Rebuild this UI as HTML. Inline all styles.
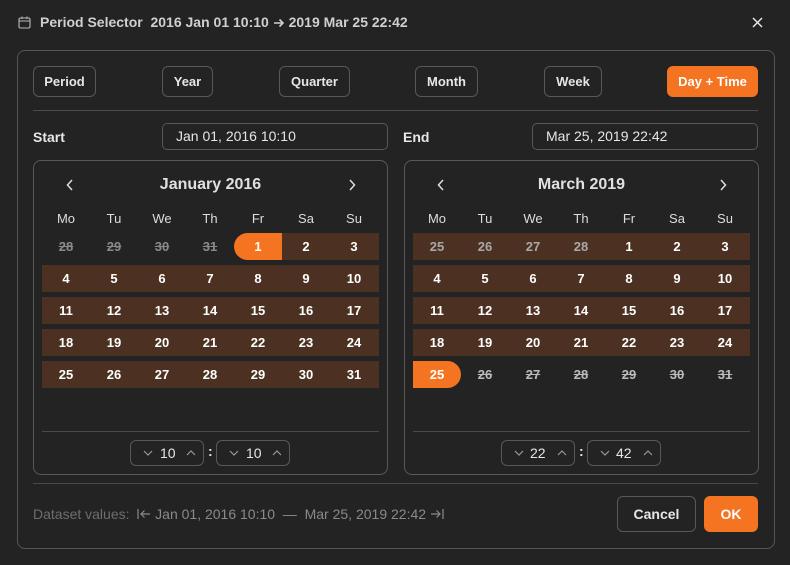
<!DOCTYPE html>
<html><head><meta charset="utf-8"><style>
*{box-sizing:border-box;margin:0;padding:0}
body{width:790px;height:565px;background:#232323;font-family:"Liberation Sans",sans-serif;color:#e6e6e6;position:relative;overflow:hidden}
.a{position:absolute}
.btn{position:absolute;top:66px;height:31px;border:1px solid #585858;border-radius:6px;font-size:13px;font-weight:bold;display:flex;align-items:center;justify-content:center;color:#e6e6e6}
.hr{position:absolute;height:1px;background:#4a4a4a}
.inp{position:absolute;top:123px;height:27px;border:1px solid #585858;border-radius:5px;font-size:14px;padding-left:13px;line-height:25px;color:#e6e6e6}
.lab{position:absolute;top:129px;font-size:14px;font-weight:bold}
.cal{position:absolute;top:160px;width:355px;height:315px;border:1px solid #585858;border-radius:8px}
.mt{position:absolute;top:15px;left:0;width:100%;text-align:center;font-size:16px;font-weight:bold;color:#e0e0e0}
.nav{position:absolute;top:18px}
.wd{position:absolute;top:50px;width:48px;text-align:center;font-size:13px;color:#ddd}
.row{position:absolute;left:8px;width:337px;height:27px;background:#4c3123}
.c{position:absolute;width:48px;height:27px;line-height:27px;text-align:center;font-size:13px;font-weight:bold;color:#fff}
.g{color:#8a8a8a;text-decoration:line-through}
.g2{color:#a8a8a8}
.s{color:#bbb;text-decoration:line-through}
.o{background:#f47421}
.sp{position:absolute;top:279px;height:26px;border:1px solid #585858;border-radius:6px;width:74px;font-size:14px;color:#e6e6e6}
.sp span{position:absolute;top:4px}
.sp svg{position:absolute;top:9px}
</style></head><body>
<svg class="a" style="left:18px;top:16px" width="13" height="13" viewBox="0 0 13 13"><rect x="1" y="2" width="11" height="10" rx="1.5" fill="none" stroke="#bbb" stroke-width="1.1"/><line x1="1" y1="5" x2="12" y2="5" stroke="#bbb" stroke-width="1"/><line x1="4" y1="0.5" x2="4" y2="3" stroke="#bbb"/><line x1="9" y1="0.5" x2="9" y2="3" stroke="#bbb"/></svg>
<div class="a" style="left:40px;top:14px;font-size:14px;font-weight:bold;color:#d0d0d0;white-space:nowrap">Period Selector&nbsp;&nbsp;2016 Jan 01 10:10 <svg width="12" height="10" style="vertical-align:-1px"><path d="M1 5H10M6.5 1.5L10 5L6.5 8.5" stroke="#d0d0d0" stroke-width="1.6" fill="none"/></svg> 2019 Mar 25 22:42</div>
<svg class="a" style="left:752px;top:17px" width="11" height="11"><path d="M1 1L10 10M10 1L1 10" stroke="#eee" stroke-width="1.4"/></svg>
<div class="a" style="left:17px;top:50px;width:758px;height:499px;border:1px solid #555;border-radius:8px"></div>
<div class="btn" style="left:33px;width:63px">Period</div>
<div class="btn" style="left:162px;width:51px">Year</div>
<div class="btn" style="left:279px;width:71px">Quarter</div>
<div class="btn" style="left:415px;width:63px">Month</div>
<div class="btn" style="left:544px;width:58px">Week</div>
<div class="btn" style="left:667px;width:91px;background:#f47421;border-color:#f47421;color:#fff">Day + Time</div>
<div class="hr" style="left:33px;top:110px;width:725px"></div>
<div class="lab" style="left:33px">Start</div>
<div class="inp" style="left:162px;width:226px">Jan 01, 2016 10:10</div>
<div class="lab" style="left:403px">End</div>
<div class="inp" style="left:532px;width:226px">Mar 25, 2019 22:42</div>

<div class="cal" style="left:33px">
<svg class="nav" style="left:32px" width="8" height="12"><path d="M6 1L1.5 6L6 11" stroke="#ddd" stroke-width="1.5" fill="none"/></svg><div class="mt">January 2016</div><svg class="nav" style="left:314px" width="8" height="12"><path d="M2 1L6.5 6L2 11" stroke="#ddd" stroke-width="1.5" fill="none"/></svg>
<div class="wd" style="left:8px">Mo</div><div class="wd" style="left:56px">Tu</div><div class="wd" style="left:104px">We</div><div class="wd" style="left:152px">Th</div><div class="wd" style="left:200px">Fr</div><div class="wd" style="left:248px">Sa</div><div class="wd" style="left:296px">Su</div>
<div class="row" style="top:72px;left:248px;width:97px"></div>
<div class="row" style="top:104px"></div><div class="row" style="top:136px"></div><div class="row" style="top:168px"></div><div class="row" style="top:200px"></div>
<div class="c g" style="left:8px;top:72px">28</div><div class="c g" style="left:56px;top:72px">29</div><div class="c g" style="left:104px;top:72px">30</div><div class="c g" style="left:152px;top:72px">31</div>
<div class="c o" style="left:200px;top:72px;border-radius:14px 0 0 14px">1</div><div class="c" style="left:248px;top:72px">2</div><div class="c" style="left:296px;top:72px">3</div>
<div class="c" style="left:8px;top:104px">4</div><div class="c" style="left:56px;top:104px">5</div><div class="c" style="left:104px;top:104px">6</div><div class="c" style="left:152px;top:104px">7</div><div class="c" style="left:200px;top:104px">8</div><div class="c" style="left:248px;top:104px">9</div><div class="c" style="left:296px;top:104px">10</div>
<div class="c" style="left:8px;top:136px">11</div><div class="c" style="left:56px;top:136px">12</div><div class="c" style="left:104px;top:136px">13</div><div class="c" style="left:152px;top:136px">14</div><div class="c" style="left:200px;top:136px">15</div><div class="c" style="left:248px;top:136px">16</div><div class="c" style="left:296px;top:136px">17</div>
<div class="c" style="left:8px;top:168px">18</div><div class="c" style="left:56px;top:168px">19</div><div class="c" style="left:104px;top:168px">20</div><div class="c" style="left:152px;top:168px">21</div><div class="c" style="left:200px;top:168px">22</div><div class="c" style="left:248px;top:168px">23</div><div class="c" style="left:296px;top:168px">24</div>
<div class="c" style="left:8px;top:200px">25</div><div class="c" style="left:56px;top:200px">26</div><div class="c" style="left:104px;top:200px">27</div><div class="c" style="left:152px;top:200px">28</div><div class="c" style="left:200px;top:200px">29</div><div class="c" style="left:248px;top:200px">30</div><div class="c" style="left:296px;top:200px">31</div>
<div class="hr" style="left:8px;top:270px;width:337px"></div>
<div class="sp" style="left:96px"><svg style="left:12px" width="10" height="6"><path d="M1 1L5 5L9 1" stroke="#999" stroke-width="1.2" fill="none"/></svg><span style="left:29px">10</span><svg style="left:55px" width="10" height="6"><path d="M1 5L5 1L9 5" stroke="#999" stroke-width="1.2" fill="none"/></svg></div>
<div class="a" style="left:174px;top:282px;font-size:14px;font-weight:bold">:</div>
<div class="sp" style="left:182px"><svg style="left:12px" width="10" height="6"><path d="M1 1L5 5L9 1" stroke="#999" stroke-width="1.2" fill="none"/></svg><span style="left:29px">10</span><svg style="left:55px" width="10" height="6"><path d="M1 5L5 1L9 5" stroke="#999" stroke-width="1.2" fill="none"/></svg></div>
</div>

<div class="cal" style="left:404px">
<svg class="nav" style="left:32px" width="8" height="12"><path d="M6 1L1.5 6L6 11" stroke="#ddd" stroke-width="1.5" fill="none"/></svg><div class="mt">March 2019</div><svg class="nav" style="left:314px" width="8" height="12"><path d="M2 1L6.5 6L2 11" stroke="#ddd" stroke-width="1.5" fill="none"/></svg>
<div class="wd" style="left:8px">Mo</div><div class="wd" style="left:56px">Tu</div><div class="wd" style="left:104px">We</div><div class="wd" style="left:152px">Th</div><div class="wd" style="left:200px">Fr</div><div class="wd" style="left:248px">Sa</div><div class="wd" style="left:296px">Su</div>
<div class="row" style="top:72px"></div><div class="row" style="top:104px"></div><div class="row" style="top:136px"></div><div class="row" style="top:168px"></div>
<div class="c g2" style="left:8px;top:72px">25</div><div class="c g2" style="left:56px;top:72px">26</div><div class="c g2" style="left:104px;top:72px">27</div><div class="c g2" style="left:152px;top:72px">28</div><div class="c" style="left:200px;top:72px">1</div><div class="c" style="left:248px;top:72px">2</div><div class="c" style="left:296px;top:72px">3</div>
<div class="c" style="left:8px;top:104px">4</div><div class="c" style="left:56px;top:104px">5</div><div class="c" style="left:104px;top:104px">6</div><div class="c" style="left:152px;top:104px">7</div><div class="c" style="left:200px;top:104px">8</div><div class="c" style="left:248px;top:104px">9</div><div class="c" style="left:296px;top:104px">10</div>
<div class="c" style="left:8px;top:136px">11</div><div class="c" style="left:56px;top:136px">12</div><div class="c" style="left:104px;top:136px">13</div><div class="c" style="left:152px;top:136px">14</div><div class="c" style="left:200px;top:136px">15</div><div class="c" style="left:248px;top:136px">16</div><div class="c" style="left:296px;top:136px">17</div>
<div class="c" style="left:8px;top:168px">18</div><div class="c" style="left:56px;top:168px">19</div><div class="c" style="left:104px;top:168px">20</div><div class="c" style="left:152px;top:168px">21</div><div class="c" style="left:200px;top:168px">22</div><div class="c" style="left:248px;top:168px">23</div><div class="c" style="left:296px;top:168px">24</div>
<div class="c o" style="left:8px;top:200px;border-radius:0 14px 14px 0">25</div><div class="c s" style="left:56px;top:200px">26</div><div class="c s" style="left:104px;top:200px">27</div><div class="c s" style="left:152px;top:200px">28</div><div class="c s" style="left:200px;top:200px">29</div><div class="c s" style="left:248px;top:200px">30</div><div class="c s" style="left:296px;top:200px">31</div>
<div class="hr" style="left:8px;top:270px;width:337px"></div>
<div class="sp" style="left:96px"><svg style="left:12px" width="10" height="6"><path d="M1 1L5 5L9 1" stroke="#999" stroke-width="1.2" fill="none"/></svg><span style="left:28px">22</span><svg style="left:55px" width="10" height="6"><path d="M1 5L5 1L9 5" stroke="#999" stroke-width="1.2" fill="none"/></svg></div>
<div class="a" style="left:174px;top:282px;font-size:14px;font-weight:bold">:</div>
<div class="sp" style="left:182px"><svg style="left:12px" width="10" height="6"><path d="M1 1L5 5L9 1" stroke="#999" stroke-width="1.2" fill="none"/></svg><span style="left:28px">42</span><svg style="left:55px" width="10" height="6"><path d="M1 5L5 1L9 5" stroke="#999" stroke-width="1.2" fill="none"/></svg></div>
</div>

<div class="hr" style="left:33px;top:483px;width:725px"></div>
<div class="a" style="left:33px;top:506px;font-size:14px;color:#6e6e6e;white-space:nowrap">Dataset values:&nbsp; <span style="color:#8a8a8a"><svg width="14" height="12" style="vertical-align:-1px"><path d="M1 1V11M13 6H4M7.5 2.5L4 6L7.5 9.5" stroke="#8a8a8a" stroke-width="1.2" fill="none"/></svg> Jan 01, 2016 10:10 &nbsp;—&nbsp; Mar 25, 2019 22:42 <svg width="14" height="12" style="vertical-align:-1px"><path d="M13 1V11M1 6H10M6.5 2.5L10 6L6.5 9.5" stroke="#8a8a8a" stroke-width="1.2" fill="none"/></svg></span></div>
<div class="a" style="left:617px;top:496px;width:79px;height:36px;border:1px solid #585858;border-radius:6px;font-size:14px;font-weight:bold;display:flex;align-items:center;justify-content:center">Cancel</div>
<div class="a" style="left:704px;top:496px;width:54px;height:36px;background:#f47421;border-radius:6px;font-size:14px;font-weight:bold;color:#fff;display:flex;align-items:center;justify-content:center">OK</div>
</body></html>
